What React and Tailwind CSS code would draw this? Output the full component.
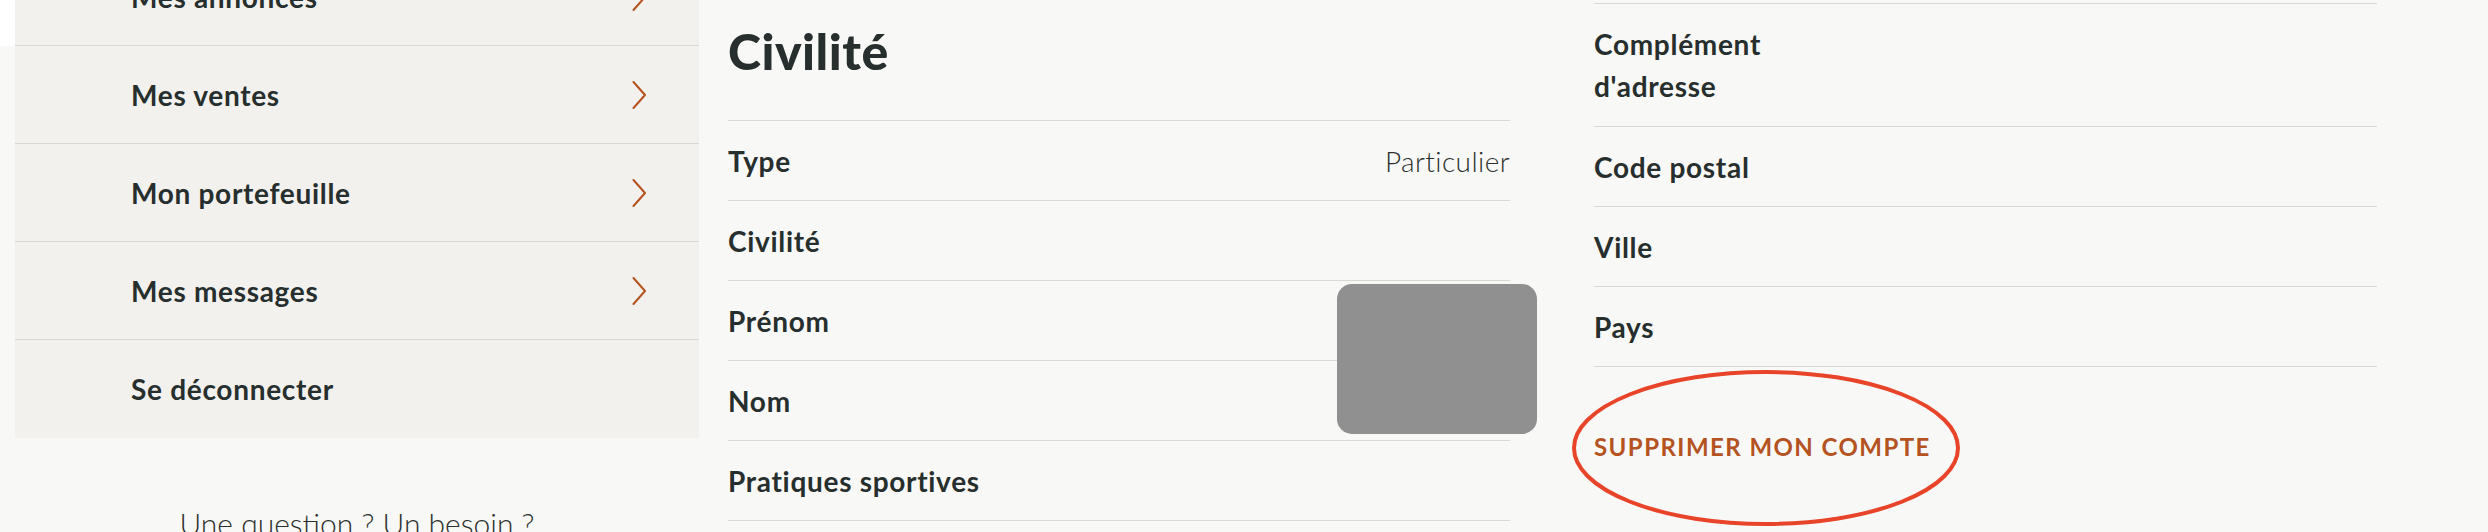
import React from 'react';

const menu = [
  { label: 'Mes annonces', arrow: true },
  { label: 'Mes ventes', arrow: true },
  { label: 'Mon portefeuille', arrow: true },
  { label: 'Mes messages', arrow: true },
  { label: 'Se déconnecter', arrow: false },
];

const identity = [
  { label: 'Type', value: 'Particulier' },
  { label: 'Civilité' },
  { label: 'Prénom' },
  { label: 'Nom' },
  { label: 'Pratiques sportives' },
];

const address = ['Code postal', 'Ville', 'Pays'];

const Chevron = () => (
  <svg width="14" height="28" viewBox="0 0 14 28" fill="none" className="text-[#b4531f]">
    <path d="M1.5 1 L13 14 L1.5 27" stroke="currentColor" strokeWidth="2" strokeLinecap="round" strokeLinejoin="round" />
  </svg>
);

const App = () => {
  return (
    <div className="w-[2488px] h-[532px] overflow-hidden bg-[#f8f8f6] text-[#262f2d] font-['Lato','Liberation_Sans',sans-serif] flex items-start">
      {/* gutter */}
      <div className="w-[15px] shrink-0">
        <div className="h-[46px] bg-white"></div>
      </div>

      {/* Account menu */}
      <aside className="w-[684px] shrink-0 -mt-[52px] flex flex-col">
        <nav className="bg-[#f2f1ee]">
          {menu.map((item, i) => (
            <a
              key={item.label}
              href="#"
              className={`h-[98px] flex items-center justify-between pl-[116px] pr-[53px] ${i < menu.length - 1 ? 'border-b border-[#d8d8d5]' : ''}`}
            >
              <span className="text-[28px] font-bold leading-[40px] tracking-[0.025em]">{item.label}</span>
              {item.arrow && <Chevron />}
            </a>
          ))}
        </nav>
        <p className="mt-[65px] text-center text-[30px] leading-[40px] font-light text-[#2b302e]">
          Une question ? Un besoin ?
        </p>
      </aside>

      {/* Civilité */}
      <section className="relative w-[782px] shrink-0 ml-[29px]">
        <h2 className="pt-[23px] h-[120px] text-[50px] leading-[56px] font-black tracking-[0.01em]">Civilité</h2>
        <dl className="border-t border-[#d8d8d5]">
          {identity.map((row) => (
            <div key={row.label} className="h-[80px] flex items-center justify-between border-b border-[#d8d8d5]">
              <dt className="text-[28px] font-bold leading-[42px] tracking-[0.025em]">{row.label}</dt>
              {row.value && (
                <dd className="text-[28px] font-light leading-[42px] tracking-[0.015em] text-[#2b302e]">{row.value}</dd>
              )}
            </div>
          ))}
        </dl>
        {/* masked photo */}
        <div className="absolute left-[609px] top-[284px] w-[200px] h-[150px] rounded-[15px] bg-[#909090]"></div>
      </section>

      {/* Adresse */}
      <section className="relative w-[783px] shrink-0 ml-[84px] mt-[3px]">
        <dl className="border-t border-[#d8d8d5]">
          <div className="py-[19px] border-b border-[#d8d8d5]">
            <dt className="text-[28px] font-bold leading-[42px] tracking-[0.025em]">
              Complément
              <br />
              d'adresse
            </dt>
          </div>
          {address.map((label) => (
            <div key={label} className="h-[80px] flex items-center border-b border-[#d8d8d5]">
              <dt className="text-[28px] font-bold leading-[42px] tracking-[0.025em]">{label}</dt>
            </div>
          ))}
        </dl>
        <a href="#" className="block mt-[68px] text-[24px] leading-[24px] font-bold uppercase tracking-[0.06em] text-[#b4531f]">
          Supprimer mon compte
        </a>
        {/* hand-drawn highlight */}
        <svg className="absolute left-[-23px] top-[365px]" width="392" height="160" viewBox="0 0 392 160" fill="none">
          <ellipse cx="195" cy="80" rx="192" ry="76" stroke="#e8442a" strokeWidth="4" />
        </svg>
      </section>
    </div>
  );
};

export default App;
